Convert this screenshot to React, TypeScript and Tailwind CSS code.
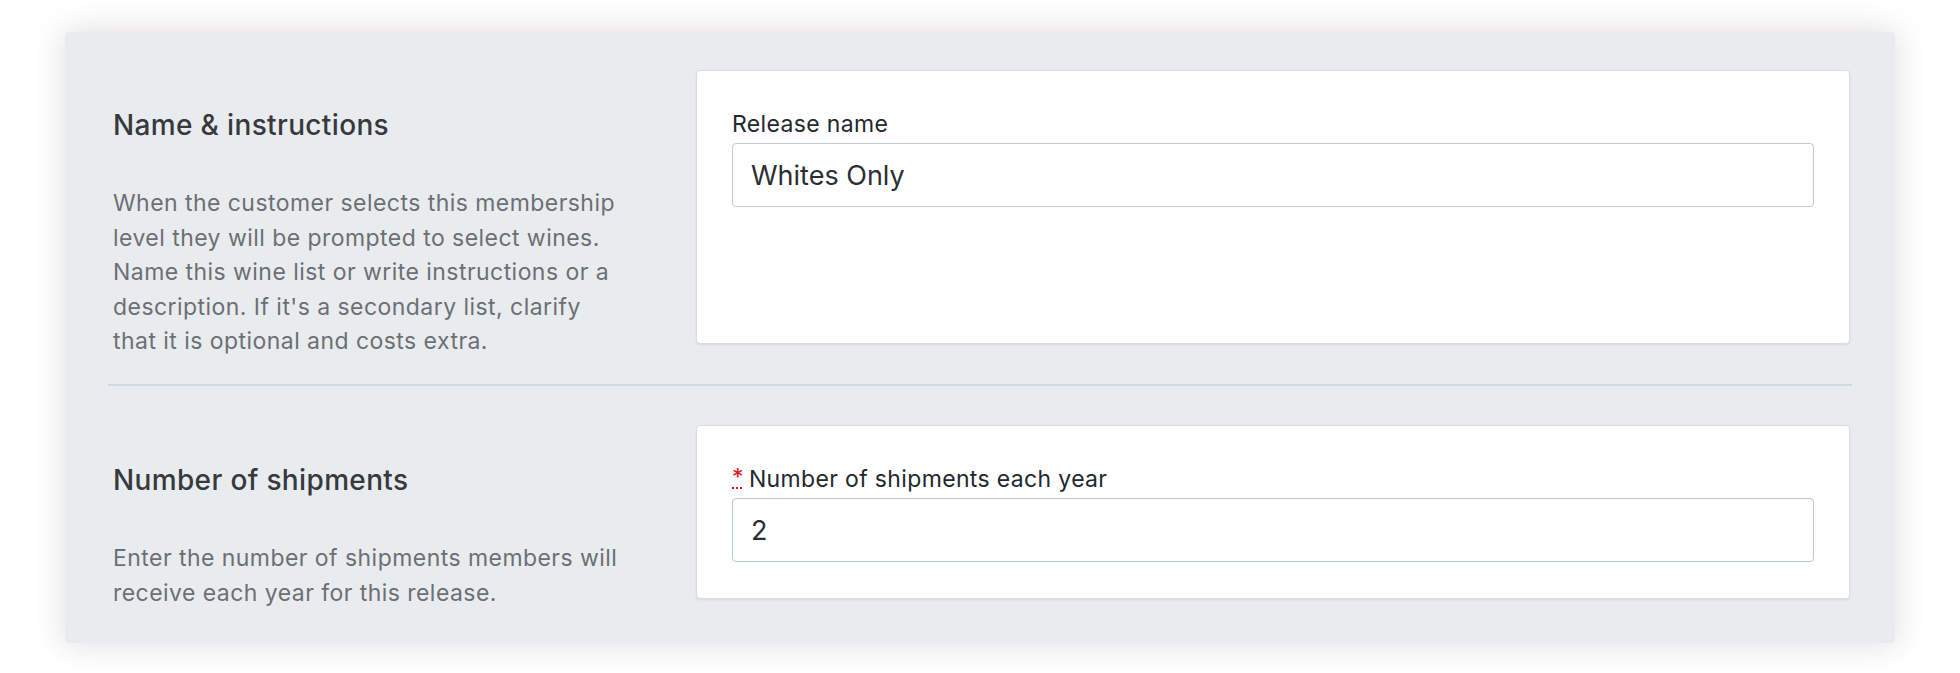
export default function App() {
  return (
    <div className="min-h-[673px] bg-white px-[65px] pt-[32px] font-['Inter',sans-serif]">
      <div className="rounded-[3px] bg-[#e9ecef] px-[43px] shadow-[0_0_32px_rgba(70,50,50,0.18)]">
        {/* Name & instructions */}
        <section className="pt-[38px] pb-[40px]">
          <div className="flex h-[274px]">
            <div className="w-[588px] shrink-0 pl-[5px] pt-[34px]">
              <h3 className="text-[28px] leading-[42px] font-medium tracking-[0.35px] text-[#37393c]">Name &amp; instructions</h3>
              <p className="mt-[40px] text-[23px] leading-[34.5px] tracking-[0.45px] text-[#6c6f73]">
                When the customer selects this membership
                <br />
                level they will be prompted to select wines.
                <br />
                Name this wine list or write instructions or a
                <br />
                description. If it's a secondary list, clarify
                <br />
                that it is optional and costs extra.
              </p>
            </div>
            <div className="mr-[2px] flex-1 rounded-[4px] border border-[#d8dde3] bg-white px-[35px] pt-[37px] shadow-[0_1px_2px_rgba(0,0,0,0.08)]">
              <label htmlFor="release-name" className="block text-[23px] leading-[33px] tracking-[0.35px] text-[#23282e]">
                Release name
              </label>
              <input
                id="release-name"
                defaultValue="Whites Only"
                className="mt-[2px] block h-[64px] w-full rounded-[4px] border border-[#c3ccd6] px-[18px] text-[27px] text-[#2b2f34] outline-none"
              />
            </div>
          </div>
        </section>

        <div className="h-[2px] bg-[#d3dae2]" />

        {/* Number of shipments */}
        <section className="pt-[39px] pb-[44px]">
          <div className="flex h-[174px] items-start">
            <div className="w-[588px] shrink-0 pl-[5px] pt-[34px]">
              <h3 className="text-[28px] leading-[42px] font-medium tracking-[0.35px] text-[#37393c]">Number of shipments</h3>
              <p className="mt-[40px] text-[23px] leading-[34.5px] tracking-[0.45px] text-[#6c6f73]">
                Enter the number of shipments members will
                <br />
                receive each year for this release.
              </p>
            </div>
            <div className="mr-[2px] h-full flex-1 rounded-[4px] border border-[#d8dde3] bg-white px-[35px] pt-[37px] shadow-[0_1px_2px_rgba(0,0,0,0.08)]">
              <label htmlFor="shipments" className="block text-[23px] leading-[33px] tracking-[0.35px] text-[#23282e]">
                <abbr
                  title="required"
                  className="relative -top-[2px] mr-[5px] text-[#e0101f] underline decoration-[#e0101f] decoration-dotted decoration-2 underline-offset-[2px]"
                >
                  *
                </abbr>
                Number of shipments each year
              </label>
              <input
                id="shipments"
                type="text"
                defaultValue="2"
                className="mt-[2px] block h-[64px] w-full rounded-[4px] border border-[#bcc7d6] px-[18px] text-[27px] text-[#2b2f34] outline-none"
              />
            </div>
          </div>
        </section>
      </div>
    </div>
  );
}
